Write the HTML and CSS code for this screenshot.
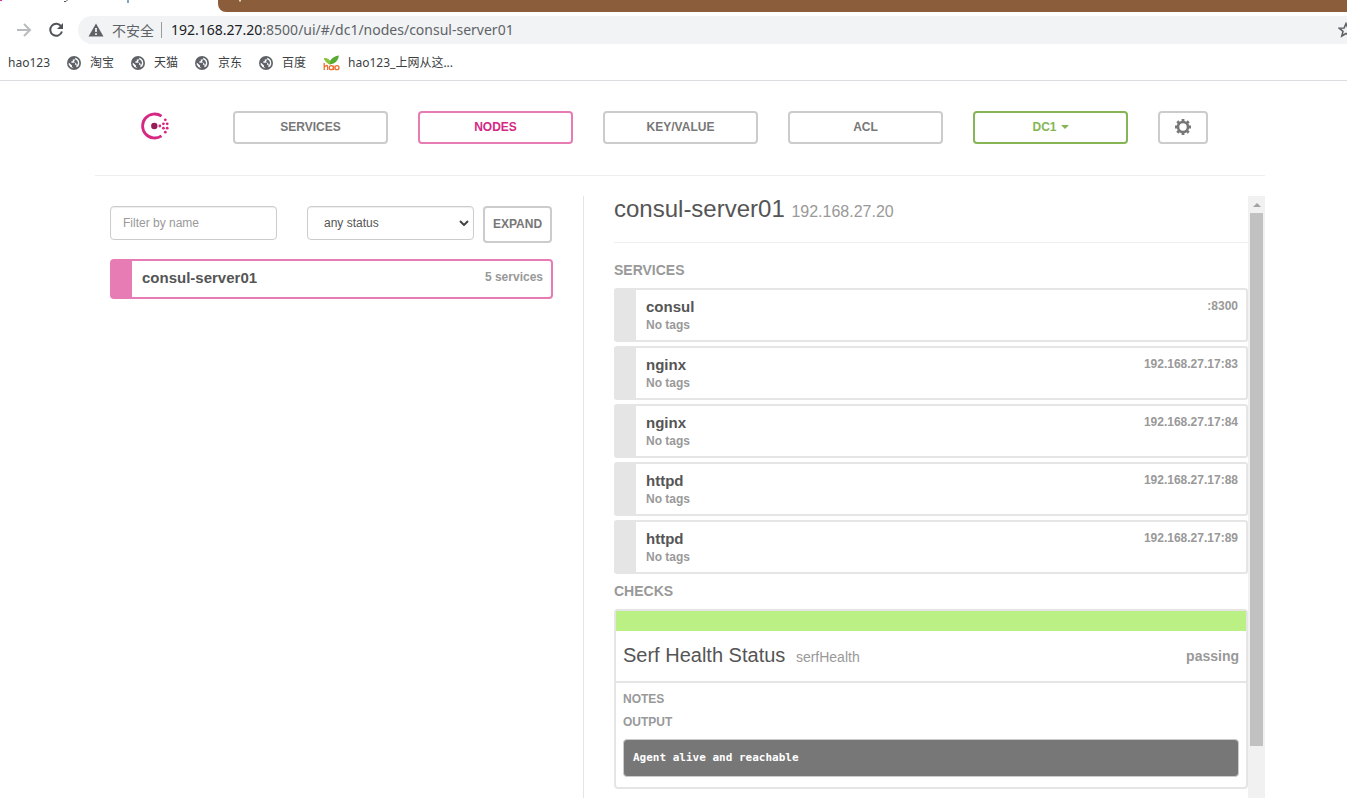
FILE: index.html
```html
<!DOCTYPE html>
<html lang="zh-CN">
<head>
<meta charset="utf-8">
<title>Consul</title>
<link rel="stylesheet" href="styles.css">
</head>
<body>
<svg class="defs" aria-hidden="true">
  <symbol id="globe" viewBox="0 0 14 14">
    <circle cx="7" cy="7" r="7" fill="#5f6368"/>
    <path d="M8.500 1.800L7.800 3.600H5.800V5.200H4.400V6.800H8.200V9H9.400V11.200L11.200 10.500 12.300 8 12 5 10.500 3ZM1.700 6.500L5 9.500V10.800L6.300 12.300 3.500 11 1.800 8.700Z" fill="#fff"/>
    <path d="M7.600 4.600L8.200 3.200 10.300 4.800 11 7 10 9.500 9 7 7 6.200Z" fill="#5f6368"/>
  </symbol>
</svg>
<header class="browser">
  <div class="tabstrip">
    <div class="active-tab"><svg width="218" height="4" viewBox="0 0 218 4" aria-hidden="true"><path d="M0 0H2V1H0Z" fill="#e03090"/><path d="M64 1.500H66L67.500 0" fill="none" stroke="#555" stroke-width="1"/><path d="M128 0V3" stroke="#4a80b0" stroke-width="1.400"/></svg></div>
    <div class="tab-rest"><svg width="24" height="4" viewBox="0 0 24 4" aria-hidden="true"><path d="M22 0V1.500" stroke="#fff" stroke-width="1.500"/></svg></div>
  </div>
  <div class="toolbar">
    <button class="tool" aria-label="Forward"><svg width="16" height="16" viewBox="0 0 16 16"><path d="M1 8H14M8 2L14 8L8 14" fill="none" stroke="#b9bbbe" stroke-width="2"/></svg></button>
    <button class="tool reload" aria-label="Reload"><svg width="16" height="16" viewBox="0 0 16 16"><path d="M13.300 4.500A6 6 0 1 0 14 9.500" fill="none" stroke="#505357" stroke-width="2"/><path d="M15 1V7H9Z" fill="#505357"/></svg></button>
    <div class="omnibox">
      <svg width="16" height="14" viewBox="0 0 16 14"><path d="M8 0.500L15.500 13.500H0.500Z" fill="#5f6368"/><path d="M8 5V9M8 10.200V12" stroke="#fff" stroke-width="1.600"/></svg>
      <span class="insecure">不安全</span>
      <span class="url"><b class="host">192.168.27.20</b>:8500/ui/#/dc1/nodes/consul-server01</span>
      <button class="star" aria-label="Bookmark"><svg width="16" height="16" viewBox="0 0 16 16"><path d="M8 1.600L9.900 6 14.600 6.300 11 9.400 12.200 14 8 11.500 3.800 14 5 9.400 1.400 6.300 6.100 6Z" fill="none" stroke="#5f6368" stroke-width="1.600"/></svg></button>
    </div>
  </div>
  <nav class="bookmarks">
    <a href="#">hao123</a>
    <a href="#"><svg width="14" height="14"><use href="#globe"/></svg>淘宝</a>
    <a href="#"><svg width="14" height="14"><use href="#globe"/></svg>天猫</a>
    <a href="#"><svg width="14" height="14"><use href="#globe"/></svg>京东</a>
    <a href="#"><svg width="14" height="14"><use href="#globe"/></svg>百度</a>
    <a href="#" class="hao"><svg width="17" height="16" viewBox="0 0 17 16"><path d="M1 3Q5 3 7 6Q10 1 16 0.500Q15 8 7 9.500Q2 7 1 3Z" fill="#58ac32"/><path d="M1 3Q5 3 7 6L7 9.500Q2 7 1 3Z" fill="#8fc43c"/><g fill="none" stroke="#ed6e2d" stroke-width="1.300"><path d="M1.200 8V15M1.200 12Q4.600 9 4.600 12V15"/><circle cx="8.300" cy="12.700" r="2"/><path d="M10.700 10.500V15"/><circle cx="14" cy="12.700" r="2"/></g></svg>hao123_上网从这...</a>
  </nav>
</header>
<div class="container">
  <nav class="topbar">
    <a class="logo" href="#" aria-label="Consul"><svg width="28" height="28" viewBox="0 0 28 28"><path d="M20.500 4.200A12 12 0 1 0 20.500 23.800" fill="none" stroke="#d62783" stroke-width="2.800"/><circle cx="13.300" cy="14" r="3.200" fill="#961d59"/><g fill="#d62783"><circle cx="18.800" cy="14" r="1.400"/><circle cx="22.400" cy="11.800" r="1.400"/><circle cx="22.400" cy="16.200" r="1.400"/><circle cx="24.300" cy="7.800" r="1.400"/><circle cx="26.200" cy="11.800" r="1.400"/><circle cx="26.200" cy="16.200" r="1.400"/><circle cx="24.300" cy="20.200" r="1.400"/></g></svg></a>
    <a class="btn" href="#">SERVICES</a>
    <a class="btn nodes" href="#">NODES</a>
    <a class="btn" href="#">KEY/VALUE</a>
    <a class="btn" href="#">ACL</a>
    <button class="btn dc">DC1<span class="caret"></span></button>
    <button class="btn gear" aria-label="Settings"><svg width="16" height="16" viewBox="0 0 16 16"><g fill="none" stroke="#777"><circle cx="8" cy="8" r="5" stroke-width="2.600"/><path d="M8 0V3M8 13V16M0 8H3M13 8H16M2.300 2.300L4.400 4.400M11.600 11.600L13.700 13.700M13.700 2.300L11.600 4.400M4.400 11.600L2.300 13.700" stroke-width="2.800"/></g></svg></button>
  </nav>
  <main class="columns">
    <section class="list">
      <form class="filters">
        <input class="field" type="text" placeholder="Filter by name" aria-label="Filter by name">
        <div class="select-wrap">
          <select class="field" aria-label="Status"><option>any status</option></select>
          <svg class="chevron" width="10" height="6" viewBox="0 0 10 6"><path d="M1 1L5 5L9 1" fill="none" stroke="#444" stroke-width="2"/></svg>
        </div>
        <button class="btn expand" type="button">EXPAND</button>
      </form>
      <a class="item selected" href="#"><span class="name">consul-server01</span><span class="meta">5 services</span></a>
    </section>
    <section class="detail">
      <div class="detail-body">
        <h1>consul-server01 <small>192.168.27.20</small></h1>
        <h2>SERVICES</h2>
        <div class="services">
          <a class="item" href="#"><span class="name">consul</span><span class="meta">:8300</span><span class="tags">No tags</span></a>
          <a class="item" href="#"><span class="name">nginx</span><span class="meta">192.168.27.17:83</span><span class="tags">No tags</span></a>
          <a class="item" href="#"><span class="name">nginx</span><span class="meta">192.168.27.17:84</span><span class="tags">No tags</span></a>
          <a class="item" href="#"><span class="name">httpd</span><span class="meta">192.168.27.17:88</span><span class="tags">No tags</span></a>
          <a class="item" href="#"><span class="name">httpd</span><span class="meta">192.168.27.17:89</span><span class="tags">No tags</span></a>
        </div>
        <h2 class="checks">CHECKS</h2>
        <article class="panel">
          <div class="panel-bar"></div>
          <header class="panel-head"><h3>Serf Health Status <small>serfHealth</small></h3><span class="state">passing</span></header>
          <div class="panel-body">
            <h4>NOTES</h4>
            <h4>OUTPUT</h4>
            <pre>Agent alive and reachable</pre>
          </div>
        </article>
      </div>
      <div class="scrollbar"><span class="arrow"></span><span class="thumb"></span></div>
    </section>
  </main>
</div>
</body>
</html>
```

FILE: styles.css
```css
* { box-sizing: border-box; }
body {
  margin: 0;
  height: 100vh;
  display: flex;
  flex-direction: column;
  overflow: hidden;
  background: #fff;
  color: #555;
  font: 12px/18px "Liberation Sans", Arial, sans-serif;
}
a { color: inherit; text-decoration: none; }
button { font-family: inherit; cursor: pointer; }
h1, h2, h3, h4, pre { margin: 0; }
.defs { position: absolute; width: 0; height: 0; }

.browser {
  flex: none;
  border-bottom: 1px solid #dadce0;
  font-family: "Noto Sans", "Noto Sans CJK SC", sans-serif;
}
.tabstrip { display: flex; height: 12px; }
.tabstrip svg { display: block; }
.active-tab { width: 218px; }
.tab-rest { flex: 1; background: #8b5d3a; border-bottom-left-radius: 8px; }
.toolbar { display: flex; align-items: center; padding: 4px 0 4px 16px; }
.tool, .star { display: flex; padding: 0; border: 0; background: none; }
.reload { margin: 0 14px 0 16px; }
.omnibox {
  flex: 1;
  display: flex;
  align-items: center;
  height: 28px;
  padding-left: 10px;
  overflow: hidden;
  border-radius: 14px 0 0 14px;
  background: #f1f3f4;
  color: #5f6368;
}
.insecure {
  margin: 0 9px 0 8px;
  padding-right: 7px;
  border-right: 1px solid #999c9f;
  font: 14px/16px "Noto Sans CJK SC", sans-serif;
}
.url { flex: 1; font-size: 14px; }
.host { font-weight: 400; color: #202124; }
.star { margin-right: -7px; }
.bookmarks {
  display: flex;
  align-items: center;
  gap: 17px;
  height: 32px;
  padding: 0 8px 2px;
  color: #3c4043;
}
.bookmarks a { display: flex; align-items: center; gap: 9px; }
.bookmarks .hao { gap: 8px; }

.container {
  flex: 1;
  min-height: 0;
  display: flex;
  flex-direction: column;
  padding: 0 82px 0 95px;
}
.topbar {
  display: grid;
  grid-template-columns: 62px repeat(5, 1fr) 50px;
  gap: 30px;
  padding: 30px 57px 31px 46px;
  border-bottom: 1px solid #eee;
}
.logo { width: 28px; padding-top: 1px; }
.logo svg { display: block; }
.btn {
  display: flex;
  align-items: center;
  justify-content: center;
  height: 33px;
  padding: 0 0 2px;
  border: 2px solid #ccc;
  border-radius: 4px;
  background: #fff;
  color: #777;
  font-size: 12px;
  font-weight: 700;
}
.nodes { border-color: #e77bb3; color: #d62783; }
.dc { gap: 4px; border-color: #85b554; color: #85b554; }
.caret { border: 4px solid transparent; border-top-color: currentColor; border-bottom: 0; }

.columns {
  flex: 1;
  min-height: 0;
  display: grid;
  grid-template-columns: 489px 1fr;
  padding-top: 20px;
}
.list { padding: 10px 30px 0 15px; border-right: 1px solid #e5e5e5; }
.filters {
  display: grid;
  grid-template-columns: 1fr 1fr 69px;
  margin-right: 1px;
}
.filters > input { justify-self: start; }
.field {
  width: 167px;
  height: 34px;
  padding: 6px 12px;
  border: 1px solid #ccc;
  border-radius: 4px;
  background: #fff;
  box-shadow: inset 0 1px 1px #ededed;
  color: #555;
  font: 12px/20px "Liberation Sans", Arial, sans-serif;
}
.field::placeholder { color: #999; opacity: 1; }
.select-wrap { position: relative; justify-self: end; margin-right: 9px; }
select.field { appearance: none; padding-left: 16px; }
.chevron { position: absolute; right: 5px; top: 14px; }
.expand { height: 37px; }

.item {
  display: grid;
  grid-template-columns: 1fr auto;
  align-content: start;
  padding: 7px 8px 7px 10px;
  border: 2px solid #e5e5e5;
  border-left-width: 22px;
  border-radius: 3px;
  font-weight: 700;
}
.name { font-size: 15px; line-height: 20px; }
.tags { color: #999; line-height: 16px; }
.meta { color: #999; }
.selected { margin-top: 16px; padding-bottom: 9px; border-color: #e77bb3; border-radius: 4px; }

.detail { display: flex; min-width: 0; overflow: hidden; }
.detail-body { flex: 1; padding-left: 30px; overflow: hidden; }
h1 {
  padding-bottom: 17px;
  border-bottom: 1px solid #eee;
  font-size: 24px;
  font-weight: 400;
  line-height: 26px;
}
h1 small { font-size: 16px; color: #999; }
h2 { margin: 17px 0 8px; font-size: 14px; line-height: 20px; color: #999; }
.services { display: grid; gap: 4px; }
h2.checks { margin-top: 7px; }
.panel { border: 2px solid #e5e5e5; border-radius: 4px; }
.panel-bar { height: 20px; background: #bbf085; }
.panel-head {
  display: flex;
  align-items: center;
  justify-content: space-between;
  height: 52px;
  padding: 0 7px;
  border-bottom: 2px solid #e5e5e5;
}
h3 { font-size: 20px; font-weight: 400; }
h3 small { margin-left: 5px; font-size: 14px; color: #999; }
.state { font-size: 14px; font-weight: 700; color: #999; }
.panel-body { padding: 7px; }
h4 { margin-bottom: 5px; font-size: 12px; line-height: 18px; color: #999; }
pre {
  margin: 8px 0 3px;
  padding: 9px;
  border: 1px solid #ccc;
  border-radius: 4px;
  background: #777;
  color: #fff;
  font: 700 11px/18px "DejaVu Sans Mono", monospace;
}
.scrollbar {
  flex: none;
  display: flex;
  flex-direction: column;
  width: 17px;
  padding: 0 2px;
  background: #f1f1f1;
}
.arrow {
  width: 0;
  margin: 7px auto 6px;
  border: 4px solid transparent;
  border-top: 0;
  border-bottom-color: #a3a3a3;
}
.thumb { flex: none; height: calc(100% - 69px); background: #c1c1c1; }
```
